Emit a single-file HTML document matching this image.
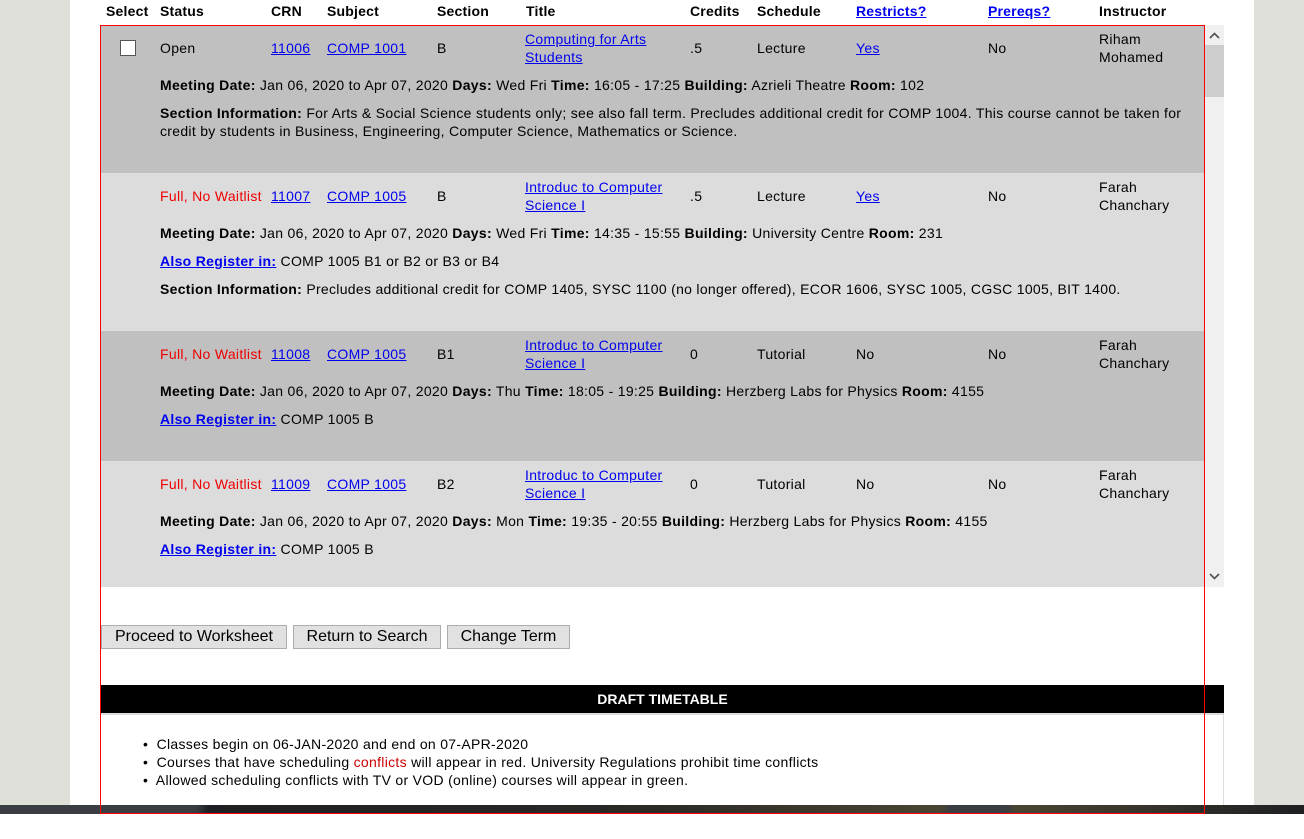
<!DOCTYPE html>
<html><head><style>
body{margin:0;width:1304px;height:839px;background:#fff;font-family:"Liberation Sans",Arial,sans-serif;font-size:14px;letter-spacing:0.3px;color:#000;position:relative;overflow:hidden}
.bgL{position:absolute;left:0;top:0;width:70px;height:805px;background:#e0e0da}
.bgR{position:absolute;left:1254px;top:0;width:50px;height:805px;background:#e0e0da}
.bar{position:absolute;left:0;top:805px;width:1304px;height:9px;background:linear-gradient(90deg,#3a3e42 0,#3a3e42 15%,#1d1f22 16%,#2a2a26 50%,#4a4432 72%,#3a3e42 73%,#3a3e42 77%,#4a4432 78%,#1d1f22 100%)}
.a{position:absolute;white-space:nowrap;line-height:18px}
.h{font-weight:bold;top:2px;letter-spacing:0.2px}
a,.l{color:#00e;text-decoration:underline}
.row{position:absolute;left:101px;width:1103px}
.red{color:#e00}
.btn{position:absolute;top:625px;height:22px;background:#e1e1e1;border:1px solid #adadad;font-size:16px;letter-spacing:0;line-height:22px;text-align:center}
</style></head><body>
<div class="bgL"></div><div class="bgR"></div>
<div class="a h" style="left:106px">Select</div>
<div class="a h" style="left:160px">Status</div>
<div class="a h" style="left:271px">CRN</div>
<div class="a h" style="left:327px">Subject</div>
<div class="a h" style="left:437px">Section</div>
<div class="a h" style="left:526px">Title</div>
<div class="a h" style="left:690px">Credits</div>
<div class="a h" style="left:757px">Schedule</div>
<div class="a h l" style="left:856px">Restricts?</div>
<div class="a h l" style="left:988px">Prereqs?</div>
<div class="a h" style="left:1099px">Instructor</div>

<div class="row" style="top:26px;height:147px;background:#c0c0c0"></div>
<div class="row" style="top:173px;height:158px;background:#dcdcdc"></div>
<div class="row" style="top:331px;height:130px;background:#c0c0c0"></div>
<div class="row" style="top:461px;height:126px;background:#dcdcdc"></div>
<div style="position:absolute;left:1205px;top:25px;width:19px;height:562px;background:#f0f0f0"></div>
<div style="position:absolute;left:1205px;top:45px;width:19px;height:52px;background:#cdcdcd"></div>
<svg style="position:absolute;left:1205px;top:25px" width="19" height="20"><path d="M5 13 L9.5 8.5 L14 13" stroke="#505050" stroke-width="1.6" fill="none"/></svg>
<svg style="position:absolute;left:1205px;top:567px" width="19" height="20"><path d="M5 7 L9.5 11.5 L14 7" stroke="#505050" stroke-width="1.6" fill="none"/></svg>

<div style="position:absolute;left:120px;top:40px;width:14px;height:14px;background:#fff;border:1px solid #555"></div>
<div class="a" style="left:160px;top:39px">Open</div>
<div class="a l" style="left:271px;top:39px">11006</div>
<div class="a l" style="left:327px;top:39px">COMP 1001</div>
<div class="a" style="left:437px;top:39px">B</div>
<div class="a l" style="left:525px;top:30px">Computing for Arts<br>Students</div>
<div class="a" style="left:690px;top:39px">.5</div>
<div class="a" style="left:757px;top:39px">Lecture</div>
<div class="a l" style="left:856px;top:39px">Yes</div>
<div class="a" style="left:988px;top:39px">No</div>
<div class="a" style="left:1099px;top:30px">Riham<br>Mohamed</div>
<div class="a" style="left:160px;top:76px"><b>Meeting Date:</b> Jan 06, 2020 to Apr 07, 2020 <b>Days:</b> Wed Fri <b>Time:</b> 16:05 - 17:25 <b>Building:</b> Azrieli Theatre <b>Room:</b> 102</div>
<div class="a" style="left:160px;top:104px"><b>Section Information:</b> For Arts &amp; Social Science students only; see also fall term. Precludes additional credit for COMP 1004. This course cannot be taken for<br>credit by students in Business, Engineering, Computer Science, Mathematics or Science.</div>

<div class="a red" style="left:160px;top:187px">Full, No Waitlist</div>
<div class="a l" style="left:271px;top:187px">11007</div>
<div class="a l" style="left:327px;top:187px">COMP 1005</div>
<div class="a" style="left:437px;top:187px">B</div>
<div class="a l" style="left:525px;top:178px">Introduc to Computer<br>Science I</div>
<div class="a" style="left:690px;top:187px">.5</div>
<div class="a" style="left:757px;top:187px">Lecture</div>
<div class="a l" style="left:856px;top:187px">Yes</div>
<div class="a" style="left:988px;top:187px">No</div>
<div class="a" style="left:1099px;top:178px">Farah<br>Chanchary</div>
<div class="a" style="left:160px;top:224px"><b>Meeting Date:</b> Jan 06, 2020 to Apr 07, 2020 <b>Days:</b> Wed Fri <b>Time:</b> 14:35 - 15:55 <b>Building:</b> University Centre <b>Room:</b> 231</div>
<div class="a" style="left:160px;top:252px"><b class="l">Also Register in:</b> COMP 1005 B1 or B2 or B3 or B4</div>
<div class="a" style="left:160px;top:280px"><b>Section Information:</b> Precludes additional credit for COMP 1405, SYSC 1100 (no longer offered), ECOR 1606, SYSC 1005, CGSC 1005, BIT 1400.</div>

<div class="a red" style="left:160px;top:345px">Full, No Waitlist</div>
<div class="a l" style="left:271px;top:345px">11008</div>
<div class="a l" style="left:327px;top:345px">COMP 1005</div>
<div class="a" style="left:437px;top:345px">B1</div>
<div class="a l" style="left:525px;top:336px">Introduc to Computer<br>Science I</div>
<div class="a" style="left:690px;top:345px">0</div>
<div class="a" style="left:757px;top:345px">Tutorial</div>
<div class="a" style="left:856px;top:345px">No</div>
<div class="a" style="left:988px;top:345px">No</div>
<div class="a" style="left:1099px;top:336px">Farah<br>Chanchary</div>
<div class="a" style="left:160px;top:382px"><b>Meeting Date:</b> Jan 06, 2020 to Apr 07, 2020 <b>Days:</b> Thu <b>Time:</b> 18:05 - 19:25 <b>Building:</b> Herzberg Labs for Physics <b>Room:</b> 4155</div>
<div class="a" style="left:160px;top:410px"><b class="l">Also Register in:</b> COMP 1005 B</div>

<div class="a red" style="left:160px;top:475px">Full, No Waitlist</div>
<div class="a l" style="left:271px;top:475px">11009</div>
<div class="a l" style="left:327px;top:475px">COMP 1005</div>
<div class="a" style="left:437px;top:475px">B2</div>
<div class="a l" style="left:525px;top:466px">Introduc to Computer<br>Science I</div>
<div class="a" style="left:690px;top:475px">0</div>
<div class="a" style="left:757px;top:475px">Tutorial</div>
<div class="a" style="left:856px;top:475px">No</div>
<div class="a" style="left:988px;top:475px">No</div>
<div class="a" style="left:1099px;top:466px">Farah<br>Chanchary</div>
<div class="a" style="left:160px;top:512px"><b>Meeting Date:</b> Jan 06, 2020 to Apr 07, 2020 <b>Days:</b> Mon <b>Time:</b> 19:35 - 20:55 <b>Building:</b> Herzberg Labs for Physics <b>Room:</b> 4155</div>
<div class="a" style="left:160px;top:540px"><b class="l">Also Register in:</b> COMP 1005 B</div>

<div class="btn" style="left:101px;width:184px">Proceed to Worksheet</div>
<div class="btn" style="left:293px;width:146px">Return to Search</div>
<div class="btn" style="left:447px;width:121px">Change Term</div>

<div style="position:absolute;left:101px;top:685px;width:1123px;height:28px;background:#000;color:#fff;font-weight:bold;text-align:center;line-height:28px;letter-spacing:0">DRAFT TIMETABLE</div>
<div style="position:absolute;left:1223px;top:713px;width:1px;height:92px;background:#ddd"></div>
<div style="position:absolute;left:101px;top:713px;width:1122px;height:2px;background:#ddd"></div>
<div class="a" style="left:143px;top:735px">&bull;&nbsp; Classes begin on 06-JAN-2020 and end on 07-APR-2020</div>
<div class="a" style="left:143px;top:753px">&bull;&nbsp; Courses that have scheduling <span style="color:#c00">conflicts</span> will appear in red. University Regulations prohibit time conflicts</div>
<div class="a" style="left:143px;top:771px">&bull;&nbsp; Allowed scheduling conflicts with TV or VOD (online) courses will appear in green.</div>

<div class="bar"></div>
<div style="position:absolute;left:100px;top:25px;width:1103px;height:787px;border:1px solid #f00"></div>
</body></html>
